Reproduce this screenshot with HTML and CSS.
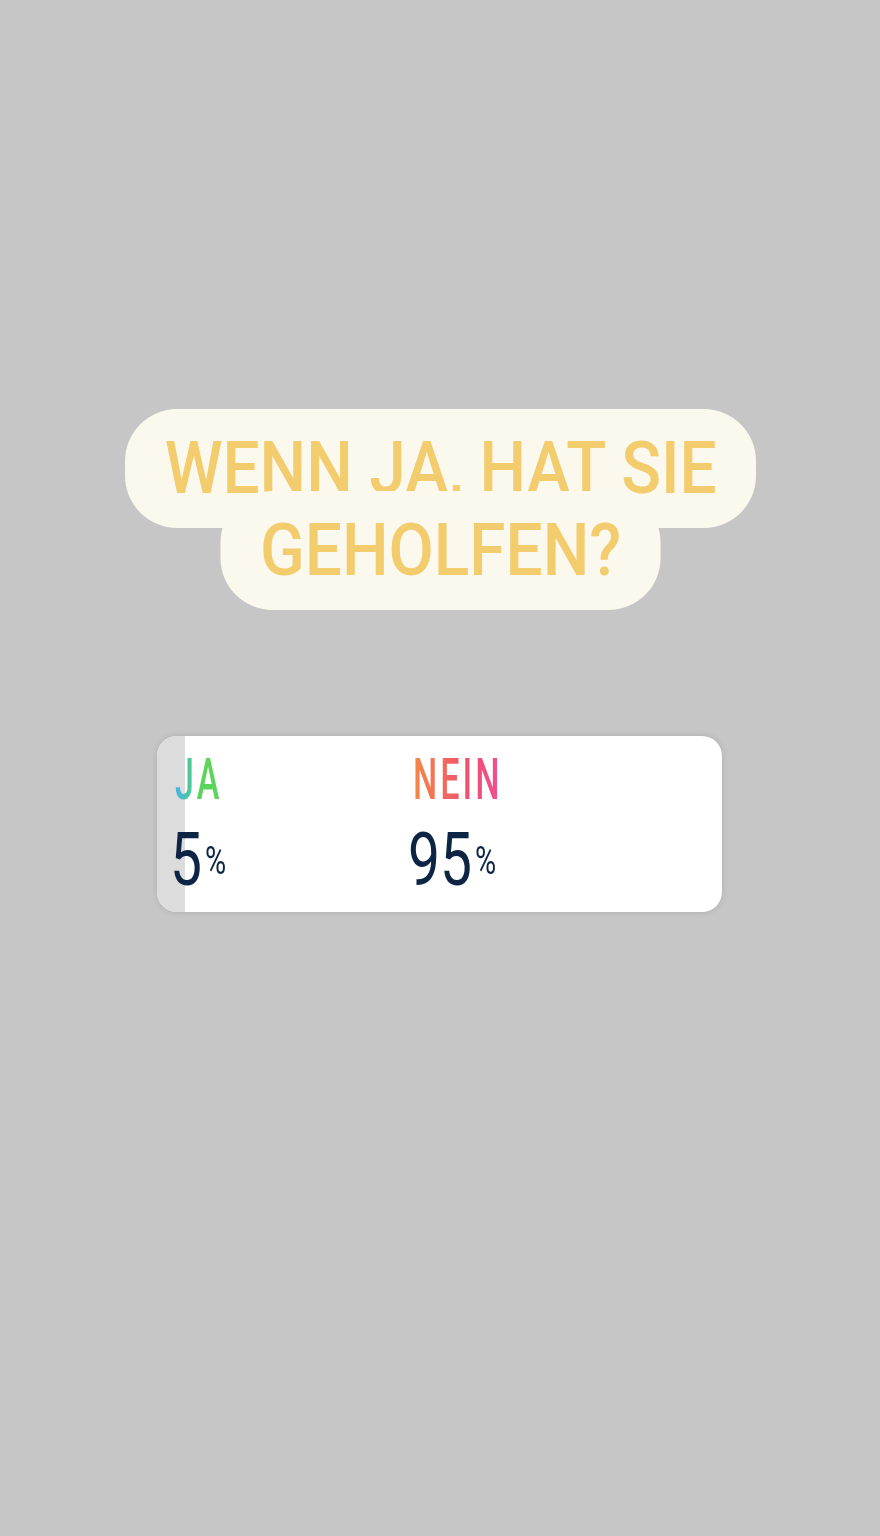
FILE: index.html
```html
<!DOCTYPE html>
<html lang="de">
<head>
    <meta charset="UTF-8">
    <meta name="viewport" content="width=device-width, initial-scale=1.0">
    <title>Umfrage</title>
    <link rel="stylesheet" href="styles.css">
</head>
<body>
    <div id="story">
        <div class="question">
            <span class="line">WENN JA, HAT SIE</span>
            <span class="line second">GEHOLFEN?</span>
        </div>
        <div class="poll">
            <div class="fill" style="width: 5%"></div>
            <div class="option">
                <div class="label ja">JA</div>
                <div class="result">5<span class="pct">%</span></div>
            </div>
            <div class="option">
                <div class="label nein">NEIN</div>
                <div class="result">95<span class="pct">%</span></div>
            </div>
        </div>
    </div>
</body>
</html>
```

FILE: styles.css
```css
* {
    margin: 0;
    padding: 0;
    box-sizing: border-box;
}
body {
    background-color: #c6c6c6;
}
#story {
    width: 880px;
    height: 1536px;
    display: flex;
    flex-direction: column;
    align-items: center;
    padding-top: 409px;
}
/* sticker text is narrower than Roboto, so the whole block is squeezed */
.question {
    display: flex;
    flex-direction: column;
    align-items: center;
    margin-left: 1px;
    font: 500 73px "Roboto", sans-serif;
    color: #f2cc6d;
    transform: scaleX(0.9);
}
.question .line {
    display: block;
    height: 119px;
    line-height: 119px;
    padding: 0 44px;
    background-color: #fbf8ee;
    border-radius: 58px / 52px;
    white-space: nowrap;
}
.question .second {
    margin-top: -37px;
}
.poll {
    position: relative;
    width: 565px;
    height: 176px;
    margin-top: 126px;
    margin-left: -1px;
    background-color: #fff;
    border-radius: 20px;
    overflow: hidden;
    box-shadow: 0 0 6px rgba(0, 0, 0, 0.12);
    display: grid;
    grid-template-columns: 238px 1fr;
    padding-left: 13px;
}
.poll .fill {
    position: absolute;
    left: 0;
    top: 0;
    bottom: 0;
    background-color: #dcdcdc;
}
.option {
    position: relative;
}
.label {
    font: 500 57px "Roboto", sans-serif;
    line-height: 1;
    letter-spacing: 5px;
    margin-top: 15px;
    margin-left: 5px;
    display: inline-block;
    transform: scaleX(0.6);
    transform-origin: left center;
    -webkit-background-clip: text;
    background-clip: text;
    color: transparent;
}
.ja {
    background-image: linear-gradient(90deg, #42b4ee, #5bd45a 55%);
}
.nein {
    background-image: linear-gradient(90deg, #f48945, #f0506f 60%, #f04f98);
}
.result {
    font: 400 75px "Roboto", sans-serif;
    line-height: 1;
    margin-top: 14px;
    color: #0d2445;
    transform: scaleX(0.76);
    transform-origin: left center;
}
.pct {
    font-size: 38px;
    margin-left: 4px;
    vertical-align: 11px;
}
```
